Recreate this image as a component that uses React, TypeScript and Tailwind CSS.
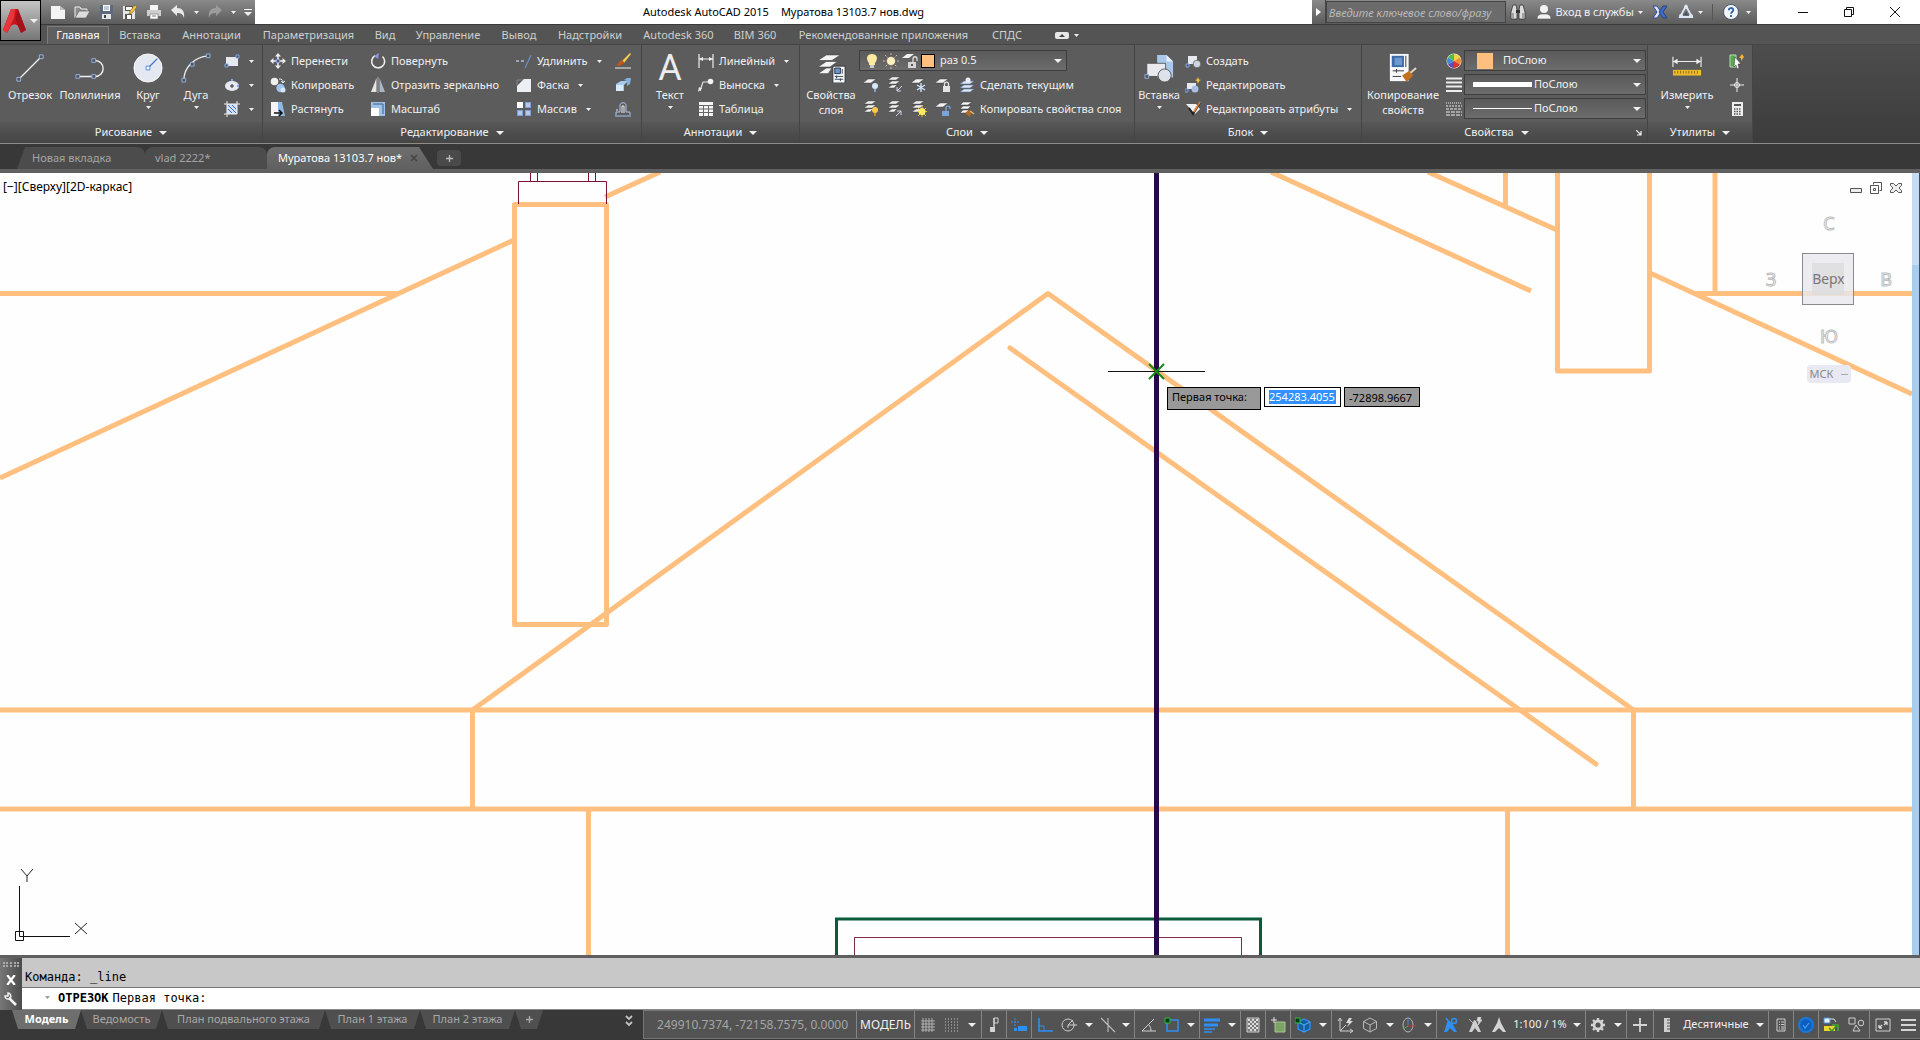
import type { ReactNode } from "react";

const GLYPHS: Record<string, ReactNode> = {
  // quick access
  newFile: <><path d="M1 2h9l5 4v9H1z" fill="#f4f4f4" /><path d="M10 2v4h5z" fill="#bdbdbd" /></>,
  open: <><path d="M1 14V3h5l1 2h6v2" fill="#8b8b8b" stroke="#f0f0f0" /><path d="M1 14 5 7h11l-4 7z" fill="#dcdcdc" stroke="#555" strokeWidth=".6" /></>,
  save: <><path d="M2 1h13v14H2z" fill="#5d6b80" /><path d="M5 1h7v6H5z" fill="#fff" /><path d="M6 3h5M6 5h5" stroke="#7d91b3" /><path d="M4 10h9v5H4z" fill="#e6e6e6" /><path d="M6 11h2v3H6z" fill="#444" /></>,
  saveAs: <><path d="M1 2h12v13H1z" fill="#e6e6e6" /><path d="M3 2h8v5H3zM3 10h7v5H3z" fill="#555" /><path d="M4 3h6v3H4zM5 11h4v4H5z" fill="#fff" /><path d="m7 10 1-3 5-6 2 2-5 6z" fill="#f2c33c" stroke="#7a5a10" strokeWidth=".6" /></>,
  print: <><path d="M4 1h8v5H4z" fill="#f6f6f6" /><path d="M1 6h14v6H1z" fill="#cfcfcf" /><path d="M4 10h8v5H4z" fill="#fff" stroke="#777" strokeWidth=".7" /><path d="M6 12h4" stroke="#777" /></>,
  undo: <path d="M1 6 7 1v3c5 0 8 3 7 10-1-4-3-5-7-5v3z" fill="#e9e9e9" />,
  redo: <path d="M15 6 9 1v3C4 4 1 7 2 14c1-4 3-5 7-5v3z" fill="#9c9c9c" />,
  binoculars: <><path d="M3 1h3l1 5v9H1V8zM13 1h-3L9 6v9h6V8z" fill="#dcdcdc" stroke="#333" strokeWidth=".8" /><path d="M6 6h4v3H6z" fill="#333" /><path d="M3 9v5M13 9v5" stroke="#666" /></>,
  user: <><circle cx="8" cy="5" r="4" fill="#f2f2f2" /><path d="M1 15c0-4 3-5 5-5h4c2 0 5 1 5 5z" fill="#f2f2f2" stroke="#555" strokeWidth=".6" /></>,
  exchange: <><path d="m1 2 4 0 4 6-4 6H1l4-6z" fill="#dfe8f8" stroke="#2b4b9b" /><path d="m15 2-4 0-4 6 4 6h4l-4-6z" fill="#3d6dc6" stroke="#23427f" /></>,
  a360: <><path d="M8 2 2 13h12z" fill="none" stroke="#dce6f4" strokeWidth="1.8" /><circle cx="8" cy="3" r="2" fill="#dce6f4" /><circle cx="3" cy="12" r="2" fill="#dce6f4" /><circle cx="13" cy="12" r="2" fill="#dce6f4" /><path d="M8 7 6 11h4z" fill="#44546d" /></>,
  help: <><circle cx="8" cy="8" r="7.500" fill="#f3f6fb" stroke="#38485f" strokeWidth=".8" /><path d="M5.800 6.300c0-3 4.500-3 4.500-.2C10.300 8 8 8 8 9.800M8 11v2" fill="none" stroke="#2e62ab" strokeWidth="1.800" /></>,

  // draw, 32 grid
  line: <><path d="M4 28 28 4" stroke="#f4f4f4" strokeWidth="1.300" /><path d="M2 26h4v4H2zM26 2h4v4h-4z" fill="#555" stroke="#9cb6e8" /></>,
  pline: <><path d="M3 25h18c12 0 12-17 0-17" fill="none" stroke="#f0f0f0" strokeWidth="1.500" /><path d="M1 23h4v4H1zM18 23h4v4h-4zM18 6h4v4h-4z" fill="#555" stroke="#8fb0ee" /></>,
  circle: <><circle cx="16" cy="16" r="15" fill="#e4e9f1" stroke="#fafafa" /><path d="M16 16 26 6" stroke="#3f73c9" strokeWidth="1.300" /><path d="M14 14h4v4h-4z" fill="#fff" stroke="#4c80d8" /></>,
  arc: <><path d="M3 29C3 16 14 4 29 3" fill="none" stroke="#f0f0f0" strokeWidth="1.400" /><path d="M1 27h4v4H1zM10 10h4v4h-4zM27 1h4v4h-4z" fill="#555" stroke="#8fb0ee" /></>,
  rect: <><path d="M2 4h12v9H2z" fill="#e7e9f0" /><path d="M1 11h3v3H1zM12 2h3v3h-3z" fill="#555" stroke="#7fa6ee" /></>,
  ellipse: <><ellipse cx="8" cy="9" rx="7" ry="5" fill="#e7e9f0" /><path d="M6 9h4M8 7v4" stroke="#333" /><path d="M7 2h2v2H7zM13 8h2v2h-2z" fill="#7fa6ee" /></>,
  hatch: <><path d="M3 3h10v10H3z" fill="#cfe0f8" /><path d="m4 8 4 4M4 4l8 8M8 4l4 4" stroke="#3f6db5" /><path d="M3 0v16M13 0v13M0 3h16M0 13h13" stroke="#eee" /></>,

  // modify
  move: <><path d="M8 1v5M8 10v5M1 8h5M10 8h5" stroke="#eee" strokeWidth="1.500" /><path d="M8 0 5 3.500h6zM8 16l-3-3.500h6zM0 8l3.500-3v6zM16 8l-3.500-3v6z" fill="#eee" /><path d="M6.500 6.500h3v3h-3z" fill="#555" stroke="#7fa6ee" /></>,
  copy: <><circle cx="4.500" cy="4.500" r="3.800" fill="#eee" /><circle cx="10.500" cy="11" r="4.200" fill="#9ec3ef" /><circle cx="13" cy="13" r="2.500" fill="#d7e6f8" /><path d="M9 2c3 0 4 1 4 3M11 4l2 2 2-2" fill="none" stroke="#eee" /></>,
  stretch: <><path d="M1 1h7v14H1z" fill="#f4f4f4" /><path d="M8 1h4l3 14H8z" fill="#8fb9e2" /><path d="M4 12h7M9 9l3 3-3 3" fill="none" stroke="#111" strokeWidth="1.500" /></>,
  rotate: <><path d="M12.500 3.500A6.500 6.500 0 1 1 5 2.700" fill="none" stroke="#eee" strokeWidth="1.600" /><path d="m9 0-5 3 4 3z" fill="#8d96d8" /></>,
  mirror: <><path d="M6.500 1v14H1z" fill="#e4e4e4" /><path d="M9.500 1v14H15z" fill="#a7b6c8" /><path d="M8 0v16" stroke="#ddd" strokeWidth=".6" /></>,
  scale: <><path d="M1 1h14v14H7V9H1z" fill="#9fc2ea" /><path d="M1 7h8v8H1z" fill="#fff" /><path d="M3 3h10v10" fill="none" stroke="#3c5c88" /></>,
  extend: <><path d="M0 8h10" stroke="#aebdd8" strokeDasharray="3 2" strokeWidth="1.300" /><path d="M15 2 9 15" stroke="#6d8fc9" strokeWidth="1.200" /></>,
  chamfer: <><path d="M1 15V9l7-7h7v13z" fill="#eceff4" /><path d="M1 8V3h6" fill="none" stroke="#9ab" strokeWidth=".6" /></>,
  array: <><path d="M1 1h6v6H1z" fill="#fff" /><path d="M9 1h6v6H9zM1 9h6v6H1zM9 9h6v6H9z" fill="#7f9fd8" /><path d="M10 2h4v4h-4zM2 10h4v4H2zM10 10h4v4h-4z" fill="#b5c9ef" /></>,
  erase: <><path d="m15 0 1 1-7 9-2-2z" fill="#f3cf4c" /><path d="M7 7c-3 1-3 4-6 5 3 2 7 0 8-3z" fill="#c4561b" /><path d="M0 15h16" stroke="#eee" /></>,
  explode: <><path d="m1 7 5-3h7l-4 4v6H1z" fill="#a7cbee" /><path d="M1 8h7v6H1z" fill="#d7eafc" /><path d="m9 3 3-2h4l-1 6-3 2V4z" fill="#82b1e2" /></>,
  offset: <><path d="M1 14v-3h4V4c0-3 6-3 6 0v7h4v3M0 15h16" fill="none" stroke="#a9c4ee" /><path d="M1 9h2M7 12V5h2v7" fill="none" stroke="#eee" /></>,

  // annotation
  dim: <><path d="M1 1v14M15 1v14M1 6h14" stroke="#eee" strokeWidth="1.200" /><path d="m1 6 4-2v4zM15 6l-4-2v4z" fill="#eee" /></>,
  leader: <><path d="M2 14 5 5h5" fill="none" stroke="#e4e4e4" strokeWidth="1.200" /><path d="m0 15 1-5 3 1.500z" fill="#eee" /><circle cx="12.500" cy="4.500" r="2.800" fill="#f4f4f4" /></>,
  table: <><path d="M1 1h14v14H1z" fill="#f4f4f4" /><path d="M1 4.500h14M1 8h14M1 11.500h14M5.500 4.500V15M10.500 4.500V15" stroke="#666" /></>,

  // layers, 32 grid
  layerProps: <><path d="M11 2h15l-9 6H2zM11 9h12l-8 6H2zM11 16h6l-4 6H2z" fill="#f4f4f4" stroke="#444" strokeWidth=".7" /><path d="M18 14h13v18H18z" fill="#f6f8fb" stroke="#333" /><path d="M20 16h6v6h-6z" fill="#6d93cf" stroke="#234" /><path d="M28 17v5M20 25h9M20 28h9M22 24v3M26 27v3" stroke="#345" /></>,
  bulb: <><path d="M8 1c6 0 6 6 3 9v2H5v-2C2 7 2 1 8 1z" fill="#fbe9a0" /><path d="M6 12h4v3H6z" fill="#c9c9c9" /></>,
  sun: <><path d="M8 0v16M0 8h16M2 2l12 12M14 2 2 14" stroke="#d9b98a" strokeDasharray="2 1.500" /><circle cx="8" cy="8" r="4" fill="#fff0c2" /></>,
  unlock: <><path d="M5 1h7L7 5H0z" fill="#f1f1f1" /><path d="M6 9h8v6H6z" fill="#d4d4d4" /><path d="M11 9V6c0-3 4-3 4 0v2" fill="none" stroke="#ddd" strokeWidth="1.300" /><path d="M9 11h2v2H9z" fill="#555" /></>,
  makeCurrent: <><path d="M5 4h10l-4 3H1zM5 8h10l-4 3H1zM5 12h10l-4 3H1z" fill="#dfe8f4" stroke="#56709a" strokeWidth=".6" /><circle cx="9" cy="3" r="2.500" fill="#eef" /></>,
  matchLayer: <><path d="M4 1h9L9 4H1zM4 5h8L9 8H1zM4 9h6l-3 3H1z" fill="#f6f6f6" stroke="#333" strokeWidth=".5" /><path d="m6 12 4-3 2 3-1 4z" fill="#b86a1c" /><path d="m11 10 4 3" stroke="#e0b77a" strokeWidth="1.500" /></>,

  // block
  insert: <><path d="M14 2h10l7 7v17H14z" fill="#a9c8ea" /><path d="M24 2v7h7z" fill="#e6f0fb" /><path d="M3 11h20v14H3z" fill="#e9eaf0" stroke="#444" strokeWidth=".8" /><circle cx="22" cy="24" r="7" fill="#dde1ea" stroke="#555" /><path d="M1 23h4v4H1z" fill="#555" stroke="#8fb0ee" /></>,
  block: <><path d="M3 3h9v8H3z" fill="#e7e9f0" /><circle cx="12" cy="11" r="3.800" fill="#cfd4df" stroke="#555" strokeWidth=".7" /><path d="M1 11h3v3H1z" fill="#555" stroke="#7fa6ee" /></>,
  blockEdit: <><path d="M2 6h9v6H2z" fill="#e7e9f0" /><circle cx="10" cy="12" r="3.500" fill="#a9c0e4" /><path d="m13 0 1 2.500L16 3l-2 1-1 3-1-3-2-1 2-.5z" fill="#f5c542" /><path d="M0 12h3v3H0z" fill="#555" stroke="#7fa6ee" /></>,
  attr: <><path d="M1 3h10l4 5-5 5z" fill="#f1f1f1" /><path d="m4 7 4 6 7-11" fill="none" stroke="#222" strokeWidth="1.800" /><path d="M15 1 9 11" stroke="#d87f35" strokeWidth="1.600" /></>,

  // properties
  matchProps: <><path d="M2 1h20v29H2z" fill="#f6f8fb" /><path d="M4 3h13v12H4z" fill="#3c6ba8" /><path d="M7 5h8v8H7z" fill="#6d98d0" /><path d="M19 3v12M5 19h12M5 25h9M9 17v4" stroke="#333" /><path d="m15 24 8-5 4 5-7 7z" fill="#c0701f" /><path d="m24 21 6-5" stroke="#e8d7b8" strokeWidth="2" /></>,
  wheel: <><circle cx="8" cy="8" r="7.500" fill="#eee" /><path d="M8 8V1a7 7 0 0 1 6 3.500z" fill="#f4d43c" /><path d="M8 8 14 4.500a7 7 0 0 1 0 7z" fill="#ef8b2c" /><path d="m8 8 6 3.500A7 7 0 0 1 8 15z" fill="#d33a2c" /><path d="M8 8v7a7 7 0 0 1-6-3.500z" fill="#6847b8" /><path d="m8 8-6 3.500a7 7 0 0 1 0-7z" fill="#3b8ed4" /><path d="M8 8 2 4.500A7 7 0 0 1 8 1z" fill="#57b94c" /></>,
  weight: <path d="M0 1.500h16M0 5.500h16M0 9.500h16M0 14h16" stroke="#eee" strokeWidth="2" />,
  linetype: <><path d="M0 2h16" stroke="#eee" strokeDasharray="1 1" /><path d="M0 5h16" stroke="#eee" strokeDasharray="2 1" /><path d="M0 8h16" stroke="#eee" strokeDasharray="3 1" /><path d="M0 11h16M0 14h16" stroke="#eee" strokeDasharray="4 1" /></>,

  // utilities
  measure: <><path d="M1 4v11M31 4v11M1 9h30" stroke="#eee" strokeWidth="1.200" /><path d="m1 9 5-3v6zM31 9l-5-3v6z" fill="#eee" /><path d="M1 18h30v6H1z" fill="#f0bd2c" /><path d="M3 19v3M6 19v3M9 19v3M12 19v3M15 19v3M18 19v3M21 19v3M24 19v3M27 19v3" stroke="#8a6408" /></>,
  quick: <><path d="M1 2h6v12H1z" fill="#56a84e" stroke="#b6dfae" /><path d="m6 4 6 7H9l1 4-2 1-1-4-2 2z" fill="#fff" stroke="#333" strokeWidth=".5" /><path d="m13 1 2 3-3 4v-3h-2z" fill="#f3b43a" /></>,
  point: <><path d="M8 1v14M1 8h14" stroke="#eee" /><circle cx="8" cy="8" r="2.500" fill="none" stroke="#eee" /></>,
  calc: <><path d="M3 1h11v14H3z" fill="#eee" /><path d="M5 3h7v2H5z" fill="#555" /><path d="M5 8h7M5 10.500h7M5 13h7" stroke="#555" strokeWidth="1.400" strokeDasharray="1.500 1" /></>,

  // status bar
  grid: <path d="M3 1v14M6 1v14M9 1v14M12 1v14M1 4h14M1 7h14M1 10h14M1 13h14" stroke="#b9b9b9" strokeWidth=".9" />,
  snap: <path d="M1 2h15M1 5h15M1 8h15M1 11h15M1 14h15" stroke="#c4c4c4" strokeDasharray="1 2" />,
  infer: <><path d="M8 1v11" stroke="#d4d4d4" strokeWidth="1.400" /><path d="M8 1h4v5H8z" fill="none" stroke="#d4d4d4" /><path d="M4 10h5v5H4z" fill="#d4d4d4" /></>,
  dyn: <><path d="M4 1v8M0 5h8" stroke="#2e90f5" strokeDasharray="2 1" /><path d="M7 9h9v5H7zM3 11h3v3H3z" fill="#2e90f5" /></>,
  ortho: <><path d="M2 1v13h14" fill="none" stroke="#2e90f5" strokeWidth="1.500" /><path d="M2 9h5v5" fill="none" stroke="#2e90f5" /></>,
  polar: <><circle cx="7" cy="8" r="6" fill="none" stroke="#cfcfcf" /><path d="M7 8h9M7 8l5-5M7 8v3" stroke="#cfcfcf" /></>,
  iso: <path d="m1 1 14 14M8 1v14" fill="none" stroke="#bdbdbd" strokeWidth="1.100" />,
  angle: <path d="M14 2 2 14h14M9 8c1 1 2 3 2 6" fill="none" stroke="#cfcfcf" />,
  osnap: <><path d="M3 3h11v11H3z" fill="none" stroke="#2e90f5" strokeWidth="1.500" /><path d="M1 1h5v5H1z" fill="#083b12" stroke="#21c43c" /></>,
  lw: <><path d="M0 3h16M0 8h14" stroke="#2e90f5" strokeWidth="3" /><path d="M0 12h11M0 15h8" stroke="#2e90f5" strokeWidth="1.500" /></>,
  transparency: <><path d="M2 1h12v14H2z" fill="#777" stroke="#ccc" /><path d="M4 2v12M8 2v12M12 2v12" stroke="#ddd" strokeWidth="2" strokeDasharray="2 2" /><path d="M6 4v11M10 4v11" stroke="#ddd" strokeWidth="2" strokeDasharray="2 2" /></>,
  cycle: <><path d="M5 5h10v10H5z" fill="#7da266" stroke="#a7c894" /><path d="M4 0v6M1 3h6" stroke="#e4e4e4" /></>,
  osnap3d: <><path d="m9 2 6 3v7l-6 3-6-3V5z" fill="#155f9f" stroke="#2e90f5" strokeWidth="1.300" /><path d="m3 5 6 3 6-3M9 8v7" fill="none" stroke="#58b0ff" /><path d="M0 1h5v5H0z" fill="#083b12" stroke="#21c43c" /></>,
  ucs: <><path d="M3 2v12h12M3 14l6-6" fill="none" stroke="#cfcfcf" /><path d="m12 1-3 5h3l-2 4 6-6h-3l2-3z" fill="#d9d9d9" /><path d="m1 4 2-3 2 3M13 12l3 2-3 2" fill="none" stroke="#cfcfcf" /></>,
  cube: <path d="m8 1 6.500 3.500v7L8 15l-6.500-3.500v-7zM1.500 4.500 8 8l6.500-3.500M8 8v7" fill="none" stroke="#b9b9b9" />,
  gizmo: <><ellipse cx="7" cy="8" rx="5" ry="7" fill="none" stroke="#b5b5b5" /><path d="M7 1v7" stroke="#3f8fd8" /><path d="m7 9-5 3" stroke="#58a858" /><path d="M7 9h8" stroke="#c23a2c" /></>,
  annoBlue: <><path d="M6 3 2 15h3l3-4 4 4h3L10 6z" fill="#2e90f5" /><circle cx="12" cy="4" r="2.500" fill="none" stroke="#2e90f5" strokeWidth="1.500" /><path d="m4 1 4 5" stroke="#2e90f5" strokeWidth="1.500" /></>,
  annoAuto: <><path d="M7 3 2 15h3l3-4 3 4h3L9 4z" fill="#cfcfcf" /><path d="m11 0-1 4h2l-1 4 4-5h-2l1-3zM2 2l4 4" fill="#d9d9d9" stroke="#cfcfcf" strokeWidth=".8" /></>,
  anno: <path d="M8 0 6 6 1 15h3l4-4 4 4h3l-5-9z" fill="#d4d4d4" />,
  gear: <><circle cx="8" cy="8" r="4" fill="none" stroke="#d4d4d4" strokeWidth="2.800" /><path d="M8 1v2M8 13v2M1 8h2M13 8h2M3 3l1.500 1.500M11.500 11.500 13 13M13 3l-1.500 1.500M4.500 11.500 3 13" stroke="#d4d4d4" strokeWidth="2.400" /></>,
  plus: <path d="M8 1v14M1 8h14" stroke="#d4d4d4" strokeWidth="1.800" />,
  ruler: <><path d="M5 1h6v14H5z" fill="#cfcfcf" /><path d="M8 3h3M8 6h3M8 9h3M8 12h3" stroke="#555" /></>,
  qprops: <><path d="M4 2h8v12H4z" fill="none" stroke="#cfcfcf" /><path d="M6 5h5M6 7.500h5M6 10h5M6 12h5" stroke="#cfcfcf" strokeDasharray="1 1 3" /></>,
  hw: <><circle cx="8" cy="8" r="8" fill="#1678e0" /><circle cx="8" cy="8" r="5.500" fill="#0c5fc0" stroke="#1b63ad" /><path d="m5 8 2 3 4-5" fill="none" stroke="#46a3ff" strokeWidth="1.200" /></>,
  isolate: <><path d="M1 1h6v5H1z" fill="#e8f0f8" stroke="#4d8fd0" /><path d="M7 2h4l2 3" fill="none" stroke="#ddd" /><path d="M1 9h11v5H1z" fill="#ecd52c" /><path d="M9 8h6v6" fill="none" stroke="#4aa83c" strokeWidth="1.600" /><path d="m6 11 3 3 6-7" fill="none" stroke="#3f8f38" strokeWidth="1.500" /></>,
  shapes: <><path d="M1 1h6v6H1zM8 8l4 6H5z" fill="none" stroke="#d0d0d0" /><circle cx="13" cy="6" r="2.800" fill="none" stroke="#d0d0d0" /></>,
  clean: <><path d="M1 2h14v12H1z" fill="none" stroke="#cfcfcf" /><path d="M4 11h3M4 11V8M4 11l3-3M12 5H9M12 5v3M12 5 9 8" stroke="#d9d9d9" strokeWidth="1.300" /></>,
  menu: <path d="M1 3h15M1 8h15M1 13h15" stroke="#d4d4d4" strokeWidth="2" />,
};

function Glyph({ name, size = 16 }: { name: string; size?: 16 | 32 }) {
  return (
    <svg viewBox={`0 0 ${size} ${size}`} className={size === 32 ? "size-[30px] shrink-0" : "size-4 shrink-0"} aria-hidden="true">
      {GLYPHS[name]}
    </svg>
  );
}

function Caret({ wide }: { wide?: boolean }) {
  return (
    <svg viewBox="0 0 8 4" className={wide ? "w-2 h-1 shrink-0" : "w-[5px] h-[3px] shrink-0"} preserveAspectRatio="none" aria-hidden="true">
      <path d="M0 0h8L4 4z" fill="#f0f0f0" />
    </svg>
  );
}

// Small layer command: one or three sheets with a badge in the corner
function LayerGlyph({ stack, badge }: { stack?: boolean; badge: string }) {
  const badges: Record<string, ReactNode> = {
    bulb: <><circle cx="12" cy="9" r="3" fill="#d6e6fa" /><path d="M11 12h2v3h-2z" fill="#7fa6d8" /></>,
    bulbOn: <><circle cx="12" cy="9" r="3" fill="#ffc94d" /><path d="M11 12h2v3h-2z" fill="#c9891c" /></>,
    arrowIn: <path d="m15 9-5 5M10 10v4h4" fill="none" stroke="#cfd8e8" />,
    arrowOut: <path d="m9 15 5-5M10 10h4v4" fill="none" stroke="#cfd8e8" />,
    frost: <path d="M10 6v9M6 8l8 5M14 8l-8 5" stroke="#cfe4fb" strokeWidth="1.400" />,
    sun: <><path d="M11 5v11M6 10.500h10M7 7l8 8M15 7l-8 8" stroke="#e0bf32" /><circle cx="11" cy="10.500" r="3.500" fill="#ffe95c" /></>,
    lock: <><path d="M8 9h7v6H8z" fill="#e4e4e4" /><path d="M9.500 9V7c0-2.500 4-2.500 4 0v2" fill="none" stroke="#e4e4e4" strokeWidth="1.300" /></>,
    unlock: <><path d="M7 10h7v5H7z" fill="#79a4dd" /><path d="M11 10V7c0-2.500 4-2.500 4 0v1" fill="none" stroke="#79a4dd" strokeWidth="1.300" /></>,
  };
  return (
    <svg viewBox="0 0 16 16" className="size-4 shrink-0" aria-hidden="true">
      <path d={stack ? "M5 0h8L9 3H1zM5 4h8L9 7H1zM5 8h5L7 11H1z" : "M5 2h8L8 6H0z"} fill="#f1f1f1" stroke="#333" strokeWidth=".4" />
      {badges[badge]}
    </svg>
  );
}

function BigButton({ icon, label, width, caret = true }: { icon: ReactNode; label: string[]; width: string; caret?: boolean }) {
  return (
    <button className={`${width} shrink-0 flex flex-col items-center pt-[3px]`}>
      <span className="flex items-center justify-center h-8">{icon}</span>
      <span className="pt-[3px] leading-[15px] text-center">
        {label.map((l) => <span key={l} className="block">{l}</span>)}
      </span>
      {caret && <span className="flex pt-1"><Caret /></span>}
    </button>
  );
}

function SmallButton({ icon, label, caret }: { icon: string; label?: string; caret?: boolean }) {
  return (
    <button aria-label={label ?? icon} className="h-6 flex items-center gap-[5px] whitespace-nowrap">
      <Glyph name={icon} />
      {label && <span>{label}</span>}
      {caret && <span className="flex pl-1"><Caret /></span>}
    </button>
  );
}

function Panel({ title, width, launcher, children }: { title: string; width: string; launcher?: boolean; children: ReactNode }) {
  return (
    <section className={`${width} shrink-0 flex flex-col border-r border-[#454545] bg-[#5c5c5c]`}>
      <div className="h-[77px] flex pt-1 pl-1">{children}</div>
      <div className="h-[21px] flex items-center bg-gradient-to-b from-[#575757] to-[#454545]">
        <button className="flex-1 flex items-center justify-center gap-[7px]">{title}<Caret wide /></button>
        {launcher && (
          <button aria-label="Параметры свойств" className="w-4 flex justify-center">
            <svg viewBox="0 0 6 6" className="size-[6px]"><path d="m0 0 5 5M5 1v4H1" fill="none" stroke="#eee" strokeWidth="1.200" /></svg>
          </button>
        )}
      </div>
    </section>
  );
}

function Combo({ label, value, lead, width }: { label: string; value: string; lead: ReactNode; width: string }) {
  return (
    <label className={`${width} h-[21px] flex items-center border border-[#3d3d3d] bg-gradient-to-b from-[#5a5a5a] to-[#6c6c6c] pr-1`}>
      {lead}
      <select aria-label={label} className="flex-1 min-w-0 appearance-none bg-transparent text-[11px] outline-none">
        <option>{value}</option>
      </select>
      <Caret wide />
    </label>
  );
}

const ribbonTabs = [
  { label: "Главная", width: "w-[62px]" },
  { label: "Вставка", width: "w-[62px]" },
  { label: "Аннотации", width: "w-[81px]" },
  { label: "Параметризация", width: "w-[113px]" },
  { label: "Вид", width: "w-10" },
  { label: "Управление", width: "w-[86px]" },
  { label: "Вывод", width: "w-14" },
  { label: "Надстройки", width: "w-[86px]" },
  { label: "Autodesk 360", width: "w-[91px]" },
  { label: "BIM 360", width: "w-[62px]" },
  { label: "Рекомендованные приложения", width: "w-[195px]" },
  { label: "СПДС", width: "w-[52px]" },
];

function TitleBar() {
  return (
    <header className="h-6 flex bg-white">
      <div className="w-[255px] shrink-0 flex items-center bg-gradient-to-b from-[#8a8a8a] to-[#5c5c5c]">
        <div className="relative z-10 self-start w-[41px]">
          <button aria-label="Меню приложения" className="w-[41px] h-[41px] flex items-center justify-center gap-[3px] border border-black bg-gradient-to-b from-[#c4c4c4] to-[#777]">
            <svg viewBox="0 0 24 26" className="w-6 h-[26px]" aria-hidden="true">
              <path d="M8 1h7l8 21-5 3-3-7c-2-2-5-2-7 0l-4 7-4-3z" fill="#c8151c" />
              <path d="M8 1h4l-1 9-7 15-4-3z" fill="#e8343a" />
              <path d="m15 1 8 21-5 3-6-15z" fill="#8d0f15" opacity=".6" />
            </svg>
            <Caret wide />
          </button>
        </div>
        <div className="flex items-center gap-2 pl-[9px]">
          {["newFile", "open", "save", "saveAs", "print", "undo"].map((n) => (
            <button key={n} aria-label={n}><Glyph name={n} /></button>
          ))}
          <Caret />
          <button aria-label="redo"><Glyph name="redo" /></button>
          <Caret />
          <button aria-label="Настройка панели" className="flex flex-col items-center gap-0.5">
            <span className="w-2 h-px bg-white" />
            <Caret wide />
          </button>
        </div>
      </div>
      <h1 className="flex-1 flex items-center justify-center gap-3 text-black">
        <span>Autodesk AutoCAD 2015</span>
        <span>Муратова 13103.7 нов.dwg</span>
      </h1>
      <div className="w-[445px] shrink-0 flex items-center bg-gradient-to-b from-[#8a8a8a] to-[#5c5c5c]">
        <button aria-label="Свернуть поиск" className="w-[14px] h-full flex items-center justify-center border-r border-[#444]">
          <svg viewBox="0 0 5 8" className="w-[5px] h-2"><path d="M0 0v8l5-4z" fill="#fff" /></svg>
        </button>
        <input aria-label="Поиск" placeholder="Введите ключевое слово/фразу" className="w-[180px] h-[22px] px-0.5 border border-[#444] bg-[#6b6b6b] italic placeholder:text-[#b9b9b9] outline-none" />
        <div className="flex-1 flex items-center justify-between pl-1 pr-[6px]">
          <button aria-label="Поиск"><Glyph name="binoculars" /></button>
          <button className="flex items-center gap-1"><Glyph name="user" />Вход в службы<Caret /></button>
          <button aria-label="Exchange"><Glyph name="exchange" /></button>
          <button aria-label="A360" className="flex items-center gap-1"><Glyph name="a360" /><Caret /></button>
          <span className="w-px h-4 bg-[#555]" />
          <button aria-label="Справка" className="flex items-center gap-[7px]"><Glyph name="help" /><Caret /></button>
        </div>
      </div>
      <div className="w-[163px] shrink-0 flex items-center justify-end gap-[34px] pr-[19px] text-black">
        <button aria-label="Свернуть"><svg viewBox="0 0 12 12" className="size-3"><path d="M1 6.500h10" stroke="#111" /></svg></button>
        <button aria-label="Развернуть"><svg viewBox="0 0 12 12" className="size-3"><path d="M1.500 3.500h7v7h-7zM3.500 3.500v-2h7v7h-2" fill="none" stroke="#111" /></svg></button>
        <button aria-label="Закрыть"><svg viewBox="0 0 12 12" className="size-3"><path d="m1 1 10 10M11 1 1 11" stroke="#111" /></svg></button>
      </div>
    </header>
  );
}

function Ribbon() {
  return (
    <>
      <nav className="h-5 flex items-end pl-[47px] bg-[#545454] border-t border-[#3a3a3a] text-[#cfcfcf]">
        {ribbonTabs.map((t, i) => (
          <button
            key={t.label}
            className={`${t.width} h-[18px] shrink-0 whitespace-nowrap ${i === 0 ? "bg-[#5f5f5f] border-x border-t border-[#7d7d7d] text-white" : ""}`}
          >
            {t.label}
          </button>
        ))}
        <button aria-label="Свернуть ленту" className="h-[18px] flex items-center gap-[5px] pl-[22px]">
          <span className="w-[14px] h-[7px] flex items-center justify-center rounded-xs bg-[#e8e8e8]">
            <svg viewBox="0 0 6 3" className="w-[6px] h-[3px]"><path d="M0 3h6L3 0z" fill="#444" /></svg>
          </span>
          <Caret />
        </button>
      </nav>

      <div className="flex border-t border-[#454545] border-b border-b-[#8c8c8c] bg-gradient-to-b from-[#4d4d4d] to-[#3c3c3c]">
        <Panel title="Рисование" width="w-[263px]">
          <BigButton icon={<Glyph name="line" size={32} />} label={["Отрезок"]} width="w-[52px]" caret={false} />
          <BigButton icon={<Glyph name="pline" size={32} />} label={["Полилиния"]} width="w-[68px]" caret={false} />
          <BigButton icon={<Glyph name="circle" size={32} />} label={["Круг"]} width="w-12" />
          <BigButton icon={<Glyph name="arc" size={32} />} label={["Дуга"]} width="w-12" />
          <div className="pl-1">
            <SmallButton icon="rect" caret />
            <SmallButton icon="ellipse" caret />
            <SmallButton icon="hatch" caret />
          </div>
        </Panel>

        <Panel title="Редактирование" width="w-[379px]">
          <div className="w-[99px] pl-[3px]">
            <SmallButton icon="move" label="Перенести" />
            <SmallButton icon="copy" label="Копировать" />
            <SmallButton icon="stretch" label="Растянуть" />
          </div>
          <div className="w-[146px] pl-1">
            <SmallButton icon="rotate" label="Повернуть" />
            <SmallButton icon="mirror" label="Отразить зеркально" />
            <SmallButton icon="scale" label="Масштаб" />
          </div>
          <div className="w-[99px] pl-1">
            <SmallButton icon="extend" label="Удлинить" caret />
            <SmallButton icon="chamfer" label="Фаска" caret />
            <SmallButton icon="array" label="Массив" caret />
          </div>
          <div className="pl-1">
            <SmallButton icon="erase" />
            <SmallButton icon="explode" />
            <SmallButton icon="offset" />
          </div>
        </Panel>

        <Panel title="Аннотации" width="w-[158px]">
          <BigButton
            icon={<span className="font-[Roboto,sans-serif] text-[36px] leading-8 text-[#ececec]">A</span>}
            label={["Текст"]}
            width="w-12"
          />
          <div className="pl-1">
            <SmallButton icon="dim" label="Линейный" caret />
            <SmallButton icon="leader" label="Выноска" caret />
            <SmallButton icon="table" label="Таблица" />
          </div>
        </Panel>

        <Panel title="Слои" width="w-[335px]">
          <BigButton icon={<Glyph name="layerProps" size={32} />} label={["Свойства", "слоя"]} width="w-[54px]" caret={false} />
          <div className="pt-[1px] pl-[1px]">
            <Combo
              label="Слой"
              value="раз 0.5"
              width="w-[208px]"
              lead={
                <span className="flex items-center gap-[3px] pl-1 pr-[5px]">
                  <Glyph name="bulb" />
                  <Glyph name="sun" />
                  <Glyph name="unlock" />
                  <span className="size-[14px] border border-black bg-[#ffbf7f]" />
                </span>
              }
            />
            <div className="h-[26px] flex items-center gap-2 pt-[2px] pl-1">
              <LayerGlyph badge="bulb" />
              <LayerGlyph stack badge="arrowIn" />
              <LayerGlyph badge="frost" />
              <LayerGlyph badge="lock" />
              <SmallButton icon="makeCurrent" label="Сделать текущим" />
            </div>
            <div className="h-6 flex items-center gap-2 pl-1">
              <LayerGlyph stack badge="bulbOn" />
              <LayerGlyph stack badge="arrowOut" />
              <LayerGlyph stack badge="sun" />
              <LayerGlyph badge="unlock" />
              <SmallButton icon="matchLayer" label="Копировать свойства слоя" />
            </div>
          </div>
        </Panel>

        <Panel title="Блок" width="w-[227px]">
          <BigButton icon={<Glyph name="insert" size={32} />} label={["Вставка"]} width="w-10" />
          <div className="pl-[6px]">
            <SmallButton icon="block" label="Создать" />
            <SmallButton icon="blockEdit" label="Редактировать" />
            <SmallButton icon="attr" label="Редактировать атрибуты" caret />
          </div>
        </Panel>

        <Panel title="Свойства" width="w-[286px]" launcher>
          <BigButton icon={<Glyph name="matchProps" size={32} />} label={["Копирование", "свойств"]} width="w-[74px]" caret={false} />
          <div className="flex flex-col pl-[6px]">
            <SmallButton icon="wheel" />
            <SmallButton icon="weight" />
            <SmallButton icon="linetype" />
          </div>
          <div className="flex flex-col gap-[3px] pt-[1px] pl-[2px]">
            <Combo label="Цвет" value="ПоСлою" width="w-[182px]" lead={<span className="size-4 ml-3 mr-[10px] bg-[#ffbf7f]" />} />
            <Combo label="Вес линий" value="ПоСлою" width="w-[182px]" lead={<span className="w-[59px] h-[5px] ml-2 mr-0.5 bg-white" />} />
            <Combo label="Тип линий" value="ПоСлою" width="w-[182px]" lead={<span className="w-[59px] h-px ml-2 mr-0.5 bg-white" />} />
          </div>
        </Panel>

        <Panel title="Утилиты" width="w-[105px]">
          <BigButton icon={<Glyph name="measure" size={32} />} label={["Измерить"]} width="w-[70px]" />
          <div className="pl-[7px]">
            <SmallButton icon="quick" />
            <SmallButton icon="point" />
            <SmallButton icon="calc" />
          </div>
        </Panel>
      </div>
    </>
  );
}

function FileTabs() {
  return (
    <div className="h-[29px] flex items-end pl-[17px] bg-[#383838] border-b-[4px] border-[#606060] text-[#a5a5a5]">
      <button className="w-[128px] h-[22px] pl-[15px] text-left rounded-tr-lg bg-[#4c4c4c] [clip-path:polygon(8px_0,100%_0,100%_100%,0_100%)]">Новая вкладка</button>
      <button className="w-[122px] h-[22px] pl-[10px] text-left rounded-t-lg bg-[#4c4c4c]">vlad 2222*</button>
      <button className="w-[166px] h-[22px] flex items-center gap-2 pl-[11px] rounded-t-lg bg-gradient-to-b from-[#6e6e6e] to-[#606060] text-white [clip-path:polygon(0_0,152px_0,100%_100%,0_100%)]">
        Муратова 13103.7 нов*
        <svg viewBox="0 0 8 8" className="size-2"><path d="m1 1 6 6M7 1 1 7" stroke="#454545" strokeWidth="1.500" /></svg>
      </button>
      <button aria-label="Новый чертеж" className="w-6 h-4 ml-1 mb-[3px] flex items-center justify-center rounded bg-[#4a4a4a]">
        <svg viewBox="0 0 8 8" className="size-[7px]"><path d="M4 0v8M0 4h8" stroke="#bbb" strokeWidth="1.500" /></svg>
      </button>
    </div>
  );
}

function Drawing() {
  return (
    <svg viewBox="0 173 1912 782" preserveAspectRatio="xMidYMid slice" className="absolute inset-0 size-full" fill="none">
      <g stroke="#ffbf7f" strokeWidth="5" strokeLinejoin="round">
        <path d="M0 293.500h399M0 478 514 240M605 197l55-25" />
        <path d="M514.500 204.500h92v420h-92z" />
        <path d="M472.500 710 1048 293.500 1633.500 710v99M472.500 709v100" />
        <path d="m1010 348 586 416" strokeLinecap="round" />
        <path d="M0 710h1912M0 809h1912M588.500 809v150M1507.500 809v150" />
        <path d="m1271 172 260 119M1428 172l129 58M1505.500 170v36" />
        <path d="M1557.500 170v201h92V170M1715 170v123M1695 293.500h217M1650 273l262 121" />
      </g>
      <path d="M530.500 172v9M537.500 172v9M588.500 172v9M595.500 172v9M518.500 204v-22.500h88V204" stroke="#7a1238" />
      <path d="M836.500 960V919h424v41" stroke="#0b5a3a" strokeWidth="3" />
      <path d="M854.500 960V937.500h387V960" stroke="#7a2a48" />
      <path d="M1156.500 170v790" stroke="#27094a" strokeWidth="5" />
      <path d="M1108 371.500h97" stroke="#111" />
      <path d="m1149 364 15 15M1164 364l-15 15" stroke="#178a17" strokeWidth="2" />
      {/* UCS icon */}
      <path d="M19.500 886v50.500H70M15.500 931.500h8v9h-8z" stroke="#111" />
      <path d="m21 869 6 7 6-7M27 876v6M75 923l12 11M87 923l-12 11" stroke="#222" />
    </svg>
  );
}

function ViewCube() {
  const letter = "text-[18px] leading-[20px] text-white [-webkit-text-stroke:1px_#bdbdbd]";
  return (
    <div className="absolute top-10 right-[14px] w-[138px] flex flex-col items-center">
      <span className={letter}>С</span>
      <div className="w-full h-[51px] mt-5 flex items-center justify-between px-[6px]">
        <span className={letter}>З</span>
        <button className="size-[52px] border border-[#8a8a8a] bg-[#e9e9ee]/80 p-[9px] text-[14px] leading-8 text-[#777]">
          <span className="size-8 flex items-center justify-center bg-[#dcdce0]/80">Верх</span>
        </button>
        <span className={letter}>В</span>
      </div>
      <span className={`${letter} mt-[22px]`}>Ю</span>
      <button className="w-11 h-[18px] mt-[19px] flex items-center justify-center gap-2 rounded bg-[#e9e9f4] text-[11px] text-[#888]">
        МСК<span className="w-[7px] h-px bg-[#aaa]" />
      </button>
    </div>
  );
}

function Viewport() {
  return (
    <div className="flex-1 min-h-0 flex">
      <main className="relative flex-1 overflow-hidden bg-[#fefefe] text-black">
        <Drawing />
        <span className="absolute left-[3px] top-[5px] text-[12px]">[−][Сверху][2D-каркас]</span>
        <div className="absolute right-[9px] top-2 flex items-center gap-[6px] text-[#555]">
          <button aria-label="Свернуть вид"><svg viewBox="0 0 14 14" className="size-[14px]"><path d="M1.500 7.500h11v4h-11z" fill="#eee" stroke="#555" /></svg></button>
          <button aria-label="Развернуть вид"><svg viewBox="0 0 14 14" className="size-[14px]"><path d="M4.500 3.500v-2h8v8h-2M1.500 4.500h8v8h-8zM4.500 7.500h2v2h-2z" fill="none" stroke="#555" /></svg></button>
          <button aria-label="Закрыть вид"><svg viewBox="0 0 14 14" className="size-[14px]"><path d="M1.500 2.500h3L7 5l2.500-2.500h3v2L10 7l2.500 2.500v2h-3L7 9l-2.500 2.500h-3v-2L4 7 1.500 4.500z" fill="#eee" stroke="#555" /></svg></button>
        </div>
        <ViewCube />
        {/* dynamic input next to the crosshair */}
        <div className="absolute left-[1167px] top-[214px] flex items-start gap-[3px]">
          <label htmlFor="dyn-x" className="w-[94px] h-[23px] flex items-center pl-1 pb-[3px] border border-black bg-[#999]">Первая точка:</label>
          <span className="w-[77px] h-5 flex items-center border border-black bg-white pl-1">
            <input id="dyn-x" defaultValue="254283.4055" className="w-[67px] h-[14px] bg-[#3390ff] text-white outline-none" />
          </span>
          <input aria-label="Y" defaultValue="-72898.9667" className="w-[76px] h-5 border border-black bg-[#999] pl-1 outline-none" />
        </div>
      </main>
      <div className="w-2 shrink-0 border-r border-[#3d4d66] bg-[#a9cdec]">
        <div className="h-[92px] bg-[#c5dcf2]" />
      </div>
    </div>
  );
}

function CommandLine() {
  return (
    <div className="flex border-t-[3px] border-[#5f5f5f] text-black font-['DejaVu_Sans_Mono',monospace] text-[12px]">
      <div className="w-[22px] shrink-0 flex flex-col items-center justify-between py-1 bg-gradient-to-r from-[#777] to-[#4c4c4c]">
        <span className="w-4 h-[5px] border-y-2 border-dotted border-[#aaa]" />
        <button aria-label="Закрыть командную строку">
          <svg viewBox="0 0 8 8" className="size-[10px]"><path d="m1 0 6 8M7 0 1 8" stroke="#fff" strokeWidth="1.800" /></svg>
        </button>
        <button aria-label="Настройка">
          <svg viewBox="0 0 14 14" className="size-[14px]"><path d="m5 6 7 7" stroke="#f4f4f4" strokeWidth="2.500" /><path d="M4 1v3H1c0 3 3 4 5 2s0-5-2-5z" fill="none" stroke="#f4f4f4" strokeWidth="1.500" /></svg>
        </button>
      </div>
      <div className="flex-1">
        <div className="h-[30px] flex items-end pb-px pl-[3px] border-b border-[#777] bg-[#c8c8c8]">Команда: _line</div>
        <div className="h-[22px] flex items-center pb-[2px] bg-white border-b border-[#888]">
          <span className="w-9 flex justify-end pr-2">
            <svg viewBox="0 0 6 3" className="w-[5px] h-[3px]"><path d="M0 0h6L3 3z" fill="#888" /></svg>
          </span>
          <label htmlFor="command" className="flex gap-1"><b>ОТРЕЗОК</b><span>Первая точка:</span></label>
          <input id="command" className="flex-1 h-[18px] outline-none" />
        </div>
      </div>
    </div>
  );
}

const layouts = [
  { label: "Модель", width: "w-[69px]" },
  { label: "Ведомость", width: "w-[81px]" },
  { label: "План подвального этажа", width: "w-[163px]" },
  { label: "План 1 этажа", width: "w-[95px]" },
  { label: "План 2 этажа", width: "w-[95px]" },
];

// Each inner list is one group of status toggles; "v" is a drop-down arrow
const toggles: { name: string; width: string }[][] = [
  [{ name: "grid", width: "w-[26px]" }, { name: "snap", width: "w-[22px]" }, { name: "v", width: "w-[18px]" }],
  [{ name: "infer", width: "w-6" }],
  [{ name: "dyn", width: "w-6" }],
  [{ name: "ortho", width: "w-[26px]" }, { name: "polar", width: "w-[22px]" }, { name: "v", width: "w-[18px]" }, { name: "iso", width: "w-[20px]" }, { name: "v", width: "w-4" }],
  [{ name: "angle", width: "w-[26px]" }, { name: "osnap", width: "w-[22px]" }, { name: "v", width: "w-4" }],
  [{ name: "lw", width: "w-6" }, { name: "v", width: "w-4" }],
  [{ name: "transparency", width: "w-6" }],
  [{ name: "cycle", width: "w-6" }],
  [{ name: "osnap3d", width: "w-6" }, { name: "v", width: "w-4" }],
  [{ name: "ucs", width: "w-[26px]" }, { name: "cube", width: "w-6" }, { name: "v", width: "w-4" }, { name: "gizmo", width: "w-[22px]" }, { name: "v", width: "w-4" }],
  [{ name: "annoBlue", width: "w-[26px]" }, { name: "annoAuto", width: "w-6" }, { name: "anno", width: "w-6" }, { name: "1:100 / 1%", width: "w-[58px]" }, { name: "v", width: "w-4" }],
  [{ name: "gear", width: "w-6" }, { name: "v", width: "w-4" }],
  [{ name: "plus", width: "w-[26px]" }],
  [{ name: "ruler", width: "w-[26px]" }, { name: "Десятичные", width: "w-[72px]" }, { name: "v", width: "w-4" }],
  [{ name: "qprops", width: "w-6" }],
  [{ name: "hw", width: "w-6" }],
  [{ name: "isolate", width: "w-6" }, { name: "shapes", width: "w-[26px]" }],
  [{ name: "clean", width: "w-[26px]" }, { name: "menu", width: "w-6" }],
];

function StatusBar() {
  return (
    <footer className="h-[30px] flex bg-[#383838]">
      <div className="flex items-start pl-3 text-[#a9a9a9]">
        {layouts.map((l, i) => (
          <button
            key={l.label}
            className={`${l.width} h-[19px] pb-px shrink-0 whitespace-nowrap [clip-path:polygon(0_0,100%_0,calc(100%-6px)_100%,6px_100%)] ${
              i === 0 ? "bg-[#6e6e6e] text-white font-bold" : "bg-[#4f4f4f]"
            }`}
          >
            {l.label}
          </button>
        ))}
        <button aria-label="Новый лист" className="w-7 h-[19px] flex items-center justify-center bg-[#4f4f4f] [clip-path:polygon(0_0,100%_0,calc(100%-6px)_100%,6px_100%)]">
          <svg viewBox="0 0 8 8" className="size-[7px]"><path d="M4 0v8M0 4h8" stroke="#aaa" strokeWidth="1.500" /></svg>
        </button>
      </div>
      <button aria-label="Все листы" className="ml-auto mr-[10px] self-start pt-[5px]">
        <svg viewBox="0 0 8 12" className="w-2 h-3"><path d="m1 1 3 3 3-3M1 7l3 3 3-3" fill="none" stroke="#c4c4c4" strokeWidth="1.800" /></svg>
      </button>
      <div className="shrink-0 flex border-y border-[#757575] bg-[#535353] mb-px">
        <span className="w-[213px] flex items-center justify-end pr-2 border-l border-[#757575] text-[12px] text-[#a5a5a5]">249910.7374, -72158.7575, 0.0000</span>
        <button className="w-[58px] border-l border-[#858585] text-[12px]">МОДЕЛЬ</button>
        {toggles.map((group, g) => (
          <div key={g} className="flex border-l border-[#858585]">
            {group.map((t, i) => (
              <button key={i} aria-label={t.name === "v" ? "Список" : t.name} className={`${t.width} flex items-center justify-center whitespace-nowrap`}>
                {t.name === "v" ? <Caret wide /> : GLYPHS[t.name] ? <Glyph name={t.name} /> : t.name}
              </button>
            ))}
          </div>
        ))}
      </div>
    </footer>
  );
}

export default function App() {
  return (
    <div className="h-screen min-w-[1280px] flex flex-col overflow-hidden bg-[#383838] text-[11px] text-[#f0f0f0] font-['Noto_Sans','Open_Sans',sans-serif]">
      <TitleBar />
      <Ribbon />
      <FileTabs />
      <Viewport />
      <CommandLine />
      <StatusBar />
    </div>
  );
}
